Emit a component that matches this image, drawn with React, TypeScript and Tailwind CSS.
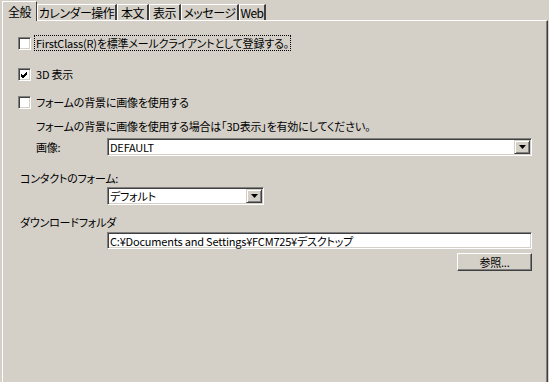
import React from "react";

const sunken =
  "border border-t-[#808080] border-l-[#808080] border-b-white border-r-white shadow-[inset_1px_1px_0_#404040,inset_-1px_-1px_0_#d4d0c8] bg-white";
const raised =
  "border border-t-white border-l-white border-b-[#404040] border-r-[#404040] shadow-[inset_-1px_-1px_0_#808080] bg-[#d4d0c8]";

const tabs = [
  { label: "全般", w: "w-[35px]", active: true },
  { label: "カレンダー操作", w: "w-[80px]" },
  { label: "本文", w: "w-[32px]" },
  { label: "表示", w: "w-[32px]" },
  { label: "メッセージ", w: "w-[58px]" },
  { label: "Web", w: "w-[27px]" },
];

function Checkbox({ checked }: { checked?: boolean }) {
  return (
    <div className={`w-[13px] h-[13px] shrink-0 flex items-center justify-center ${sunken}`}>
      {checked && (
        <svg width="7" height="7" viewBox="0 0 7 7">
          <path d="M0 3 L2 5 L6 1 M0 4 L2 6 L6 2 M0 5 L2 7 L6 3" stroke="#000" strokeWidth="1" fill="none" />
        </svg>
      )}
    </div>
  );
}

function DropButton() {
  return (
    <div className="w-[16px] h-[14px] shrink-0 flex items-center justify-center bg-[#d4d0c8] border border-t-[#d4d0c8] border-l-[#d4d0c8] border-b-[#404040] border-r-[#404040] shadow-[inset_1px_1px_0_#fff,inset_-1px_-1px_0_#808080]">
      <svg width="7" height="4" viewBox="0 0 7 4">
        <path d="M0 0 H7 L3.5 4 Z" fill="#000" />
      </svg>
    </div>
  );
}

function Select({ value, width }: { value: string; width: string }) {
  return (
    <div className={`${width} h-[18px] flex items-center pl-[2px] pr-[1px] ${sunken}`}>
      <span className="flex-1 leading-[14px]">{value}</span>
      <DropButton />
    </div>
  );
}

export default function App() {
  return (
    <div className="w-[549px] h-[382px] overflow-hidden whitespace-nowrap bg-[#d4d0c8] text-black text-[11px] leading-[14px] tracking-[-0.2px] font-['Noto_Sans_CJK_JP',sans-serif] [font-feature-settings:'palt']">
      <div className="flex items-end h-[20px] pl-[2px] text-[12px] tracking-[-0.5px]">
        {tabs.map((t) =>
          t.active ? (
            <div
              key={t.label}
              className={`${t.w} h-[20px] relative z-10 -mb-[1px] bg-[#d4d0c8] border-t border-l border-t-white border-l-white border-r border-r-[#404040] flex items-center justify-center`}
            >
              {t.label}
            </div>
          ) : (
            <div
              key={t.label}
              className={`${t.w} h-[16px] bg-[#d4d0c8] border-t border-l border-t-white border-l-white border-r-2 border-r-[#404040] flex items-center justify-center`}
            >
              {t.label}
            </div>
          )
        )}
      </div>
      <div className="ml-[2px] w-[546px] h-[370px] border-t border-l border-t-white border-l-white border-r border-r-[#404040] shadow-[inset_-1px_0_0_#808080] pl-[15px] pt-[14px]">
        <div className="flex items-center h-[16px]">
          <Checkbox />
          <span className="ml-[3px] px-[1px] h-[16px] flex items-center border border-dotted border-black">
            FirstClass(R)を標準メールクライアントとして登録する。
          </span>
        </div>
        <div className="flex items-center h-[16px] mt-[15px]">
          <Checkbox checked />
          <span className="ml-[5px]">3D 表示</span>
        </div>
        <div className="flex items-center h-[16px] mt-[12px]">
          <Checkbox />
          <span className="ml-[5px]">フォームの背景に画像を使用する</span>
        </div>
        <div className="mt-[9px] ml-[18px] h-[14px]">
          フォームの背景に画像を使用する場合は「3D表示」を有効にしてください。
        </div>
        <div className="mt-[5px] flex items-center">
          <span className="ml-[18px] w-[71px]">画像:</span>
          <Select value="DEFAULT" width="w-[425px]" />
        </div>
        <div className="mt-[15px] ml-[2px] h-[14px]">コンタクトのフォーム:</div>
        <div className="mt-[2px] pl-[89px]">
          <Select value="デフォルト" width="w-[157px]" />
        </div>
        <div className="mt-[10px] ml-[2px] h-[14px]">ダウンロードフォルダ</div>
        <div className="mt-[3px] pl-[89px]">
          <div className={`w-[425px] h-[17px] flex items-center pl-[2px] ${sunken}`}>
            C:¥Documents and Settings¥FCM725¥デスクトップ
          </div>
        </div>
        <div className="mt-[4px] pl-[439px]">
          <div className={`w-[75px] h-[18px] flex items-center justify-center ${raised}`}>参照...</div>
        </div>
      </div>
    </div>
  );
}
